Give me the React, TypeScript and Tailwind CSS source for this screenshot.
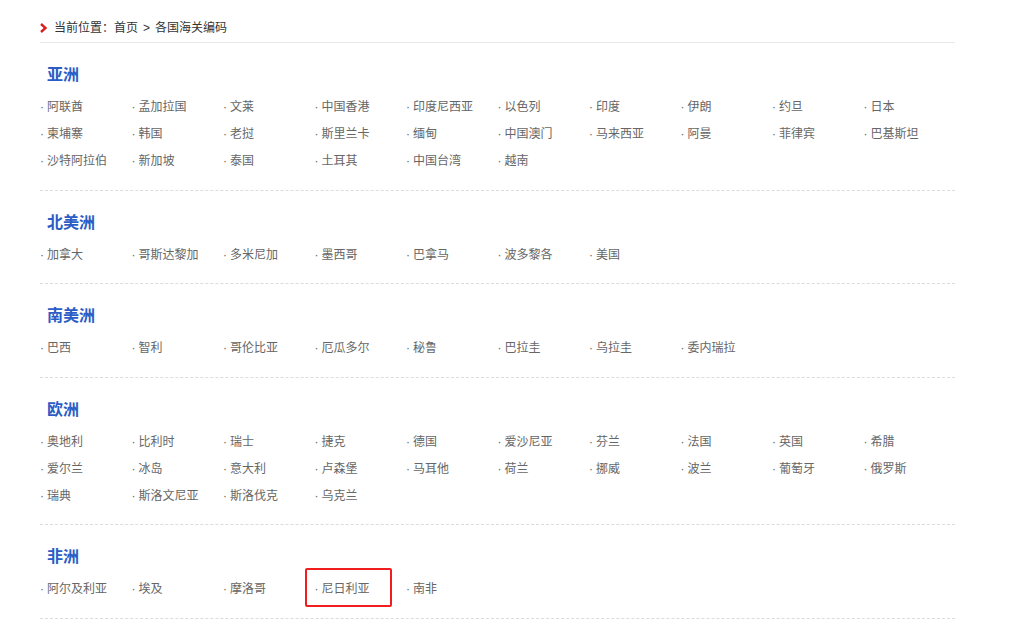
const regions: { name: string; items: string[] }[] = [
  {
    name: '亚洲',
    items: [
      '阿联酋', '孟加拉国', '文莱', '中国香港', '印度尼西亚', '以色列', '印度', '伊朗', '约旦', '日本',
      '柬埔寨', '韩国', '老挝', '斯里兰卡', '缅甸', '中国澳门', '马来西亚', '阿曼', '菲律宾', '巴基斯坦',
      '沙特阿拉伯', '新加坡', '泰国', '土耳其', '中国台湾', '越南',
    ],
  },
  {
    name: '北美洲',
    items: ['加拿大', '哥斯达黎加', '多米尼加', '墨西哥', '巴拿马', '波多黎各', '美国'],
  },
  {
    name: '南美洲',
    items: ['巴西', '智利', '哥伦比亚', '厄瓜多尔', '秘鲁', '巴拉圭', '乌拉圭', '委内瑞拉'],
  },
  {
    name: '欧洲',
    items: [
      '奥地利', '比利时', '瑞士', '捷克', '德国', '爱沙尼亚', '芬兰', '法国', '英国', '希腊',
      '爱尔兰', '冰岛', '意大利', '卢森堡', '马耳他', '荷兰', '挪威', '波兰', '葡萄牙', '俄罗斯',
      '瑞典', '斯洛文尼亚', '斯洛伐克', '乌克兰',
    ],
  },
  {
    name: '非洲',
    items: ['阿尔及利亚', '埃及', '摩洛哥', '尼日利亚', '南非'],
  },
];

export default function App() {
  return (
    <div className="min-h-[625px] bg-white font-['Liberation_Sans','Noto_Sans_CJK_SC',sans-serif]">
      <div className="ml-[40px] w-[915px]">
        <div className="flex items-center border-b border-[#e8e8e8] pt-[18px] pb-[4px] text-[12px] leading-5 text-[#333]">
          <svg className="mr-[7px] h-[10px] w-[7px]" viewBox="0 0 7 10">
            <path d="M1 1 L5.5 5 L1 9" fill="none" stroke="#d71f1f" strokeWidth="2.4" />
          </svg>
          <span>当前位置：首页</span>
          <span className="mx-[5px]">&gt;</span>
          <span>各国海关编码</span>
        </div>

        {regions.map((r) => (
          <div key={r.name} className="border-b border-dashed border-[#dcdcdc] pt-[20px] pb-[14.5px]">
            <h3 className="ml-[7px] h-6 text-base font-bold leading-6 text-[#2c5cc5]">{r.name}</h3>
            <ul className="mt-[7px] grid grid-cols-10">
              {r.items.map((c) => (
                <li key={c} className="relative h-[27px] whitespace-nowrap text-[12px] leading-[27px] text-[#666]">
                  <span className="mr-[3px]">·</span>
                  {c}
                  {c === '尼日利亚' && (
                    <span className="absolute left-[-10px] top-[-8px] h-[39px] w-[87px] rounded-[2px] border-2 border-[#f01e1e]" />
                  )}
                </li>
              ))}
            </ul>
          </div>
        ))}
      </div>
    </div>
  );
}
